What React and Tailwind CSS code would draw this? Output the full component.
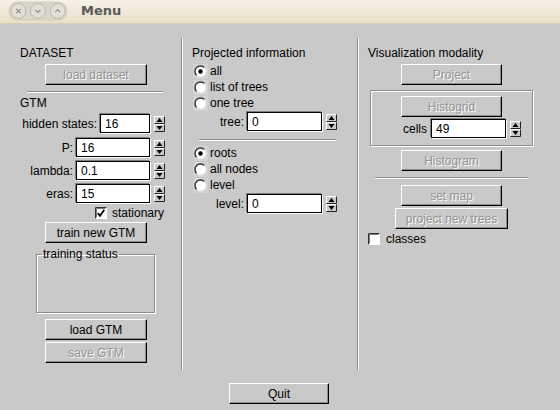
import React from 'react'

function Btn({ children, disabled, className = '' }) {
  return (
    <div
      className={`flex h-[21px] items-center justify-center border border-t-white border-l-white border-r-black border-b-black shadow-[inset_-1px_-1px_0_#8c8c8c] leading-none ${
        disabled ? 'text-[#939393] [text-shadow:1px_1px_0_#fff]' : 'text-black'
      } ${className}`}
    >
      {children}
    </div>
  )
}

function Entry({ value, className = '' }) {
  return (
    <div
      className={`flex h-[19px] items-center border border-black bg-white pl-[4px] leading-none shadow-[1px_1px_0_#fff,-1px_-1px_0_#7c7c7c] ${className}`}
    >
      {value}
    </div>
  )
}

function Spin({ className = '' }) {
  return (
    <svg width="11" height="16" viewBox="0 0 11 16" className={className}>
      <rect x="0" y="0" width="11" height="16" fill="#c9c9c9" />
      <path d="M0.5 7.5V0.5H10.5" stroke="#fff" fill="none" />
      <path d="M0.5 7.5H10.5V0.5" stroke="#222" fill="none" />
      <path d="M0.5 15.5V8.5H10.5" stroke="#fff" fill="none" />
      <path d="M0.5 15.5H10.5V8.5" stroke="#222" fill="none" />
      <polygon points="5.5,2 2.5,6 8.5,6" fill="#000" />
      <polygon points="2.5,10 8.5,10 5.5,14" fill="#000" />
    </svg>
  )
}

function Sep({ className = '' }) {
  return <div className={`h-[2px] border-t border-b border-t-[#8c8c8c] border-b-white ${className}`} />
}

function Radio({ checked, children, className = '' }) {
  return (
    <div className={`flex h-[16px] items-center ${className}`}>
      <svg width="15" height="15" viewBox="0 0 15 15">
        <rect width="15" height="15" fill="#d2d2d2" />
        <circle cx="7.5" cy="7.5" r="5.5" fill="#fff" />
        <path d="M3.6 11.4A5.5 5.5 0 0 1 11.4 3.6" stroke="#333" strokeWidth="1.4" fill="none" />
        <path d="M11.4 3.6A5.5 5.5 0 0 1 3.6 11.4" stroke="#e8e8e8" strokeWidth="1" fill="none" />
        {checked && <circle cx="7.5" cy="7.5" r="2.2" fill="#000" />}
      </svg>
      <span className="ml-[2px] leading-none">{children}</span>
    </div>
  )
}

function Check({ checked }) {
  return (
    <svg width="12" height="12" viewBox="0 0 12 12">
      <rect x="0" y="0" width="12" height="12" fill="#fff" />
      <path d="M0.5 11.5V0.5H11.5" stroke="#333" fill="none" />
      <path d="M1.5 10.5V1.5H10.5" stroke="#777" fill="none" />
      {checked && <path d="M2.8 6.2L5 8.8L9.3 2.8" stroke="#000" strokeWidth="1.8" fill="none" />}
    </svg>
  )
}

function SpinRow({ label, value, entryW, className = '' }) {
  return (
    <div className={`flex items-center justify-end ${className}`}>
      <span className="leading-none">{label}</span>
      <Entry value={value} className={`ml-[3px] ${entryW}`} />
      <Spin className="ml-[4px]" />
    </div>
  )
}

function TitleBar() {
  return (
    <div className="flex h-[24px] items-start border-b border-b-[#d8cfb8] bg-gradient-to-b from-[#f6f2e8] to-[#e9e0c8]">
      <svg width="60" height="20" viewBox="0 0 60 20" className="ml-[8px] mt-[1px]">
        <rect x="1" y="1" width="58" height="18" rx="9" fill="#dcd7cb" stroke="#d2cbba" />
        {[10.5, 30, 49.7].map((cx) => (
          <circle key={cx} cx={cx} cy="10" r="7.5" fill="#e2dfd9" stroke="#bcb7ad" />
        ))}
        <path d="M8.3 7.8L12.7 12.2M12.7 7.8L8.3 12.2" stroke="#8e8a83" strokeWidth="1.2" />
        <path d="M27.5 8.8L30 11.3L32.5 8.8" stroke="#8e8a83" strokeWidth="1.2" fill="none" />
        <path d="M47.2 11.2L49.7 8.7L52.2 11.2" stroke="#8e8a83" strokeWidth="1.2" fill="none" />
      </svg>
      <span className="ml-[13px] mt-[3px] font-['DejaVu_Sans',sans-serif] text-[13px] font-bold leading-[16px] text-[#5a5a5a]">
        Menu
      </span>
    </div>
  )
}

export default function App() {
  return (
    <div className="h-[410px] w-[560px] overflow-hidden bg-[#c9c9c9] font-['Liberation_Sans',Arial,sans-serif] text-[12px] text-black">
      <TitleBar />
      <div className="mt-[14px] flex h-[332px]">
        {/* left column */}
        <div className="flex w-[181px] flex-col">
          <div className="ml-[20px] mt-[8px] leading-[14px]">DATASET</div>
          <Btn disabled className="ml-[45px] mt-[4px] w-[102px]">load dataset</Btn>
          <Sep className="ml-[27px] mt-[6px] w-[136px]" />
          <div className="ml-[20px] mt-[3px] leading-[14px]">GTM</div>
          <SpinRow label="hidden states:" value="16" entryW="w-[50px]" className="mt-[4px] w-[165px]" />
          <SpinRow label="P:" value="16" entryW="w-[74px]" className="mt-[5px] w-[165px]" />
          <SpinRow label="lambda:" value="0.1" entryW="w-[74px]" className="mt-[4px] w-[165px]" />
          <SpinRow label="eras:" value="15" entryW="w-[74px]" className="mt-[4px] w-[165px]" />
          <div className="ml-[95px] mt-[4px] flex h-[12px] items-center">
            <Check checked />
            <span className="ml-[5px] leading-none">stationary</span>
          </div>
          <Btn className="ml-[45px] mt-[3px] w-[102px]">train new GTM</Btn>
          <fieldset className="ml-[36px] mt-[4px] h-[66px] w-[119px] border border-[#8c8c8c] shadow-[inset_1px_1px_0_#fff,1px_1px_0_#fff]">
            <legend className="ml-[5px] px-px leading-[14px]">training status</legend>
          </fieldset>
          <Btn className="ml-[45px] mt-[6px] w-[102px]">load GTM</Btn>
          <Btn disabled className="ml-[45px] mt-[2px] w-[102px]">save GTM</Btn>
        </div>

        <div className="w-[2px] border-l border-r border-l-[#8c8c8c] border-r-white" />

        {/* middle column */}
        <div className="flex w-[174px] flex-col">
          <div className="ml-[9px] mt-[8px] leading-[14px]">Projected information</div>
          <Radio checked className="ml-[10px] mt-[3px]">all</Radio>
          <Radio className="ml-[10px]">list of trees</Radio>
          <Radio className="ml-[10px]">one tree</Radio>
          <SpinRow label="tree:" value="0" entryW="w-[75px]" className="mt-[1px] w-[154px]" />
          <Sep className="ml-[16px] mt-[8px] w-[137px]" />
          <Radio checked className="ml-[10px] mt-[4px]">roots</Radio>
          <Radio className="ml-[10px]">all nodes</Radio>
          <Radio className="ml-[10px]">level</Radio>
          <SpinRow label="level:" value="0" entryW="w-[75px]" className="mt-[1px] w-[154px]" />
        </div>

        <div className="w-[2px] border-l border-r border-l-[#8c8c8c] border-r-white" />

        {/* right column */}
        <div className="flex flex-1 flex-col">
          <div className="ml-[9px] mt-[8px] leading-[14px]">Visualization modality</div>
          <Btn disabled className="ml-[42px] mt-[4px] w-[101px]">Project</Btn>
          <div className="ml-[11px] mt-[5px] flex h-[56px] w-[163px] flex-col border border-[#8c8c8c] shadow-[inset_1px_1px_0_#fff,1px_1px_0_#fff]">
            <Btn disabled className="ml-[30px] mt-[5px] w-[101px]">Histogrid</Btn>
            <div className="ml-[32px] mt-[2px] flex items-center">
              <span className="leading-none">cells</span>
              <Entry value="49" className="ml-[4px] w-[75px]" />
              <Spin className="ml-[4px]" />
            </div>
          </div>
          <Btn disabled className="ml-[42px] mt-[4px] w-[101px]">Histogram</Btn>
          <Sep className="ml-[16px] mt-[6px] w-[153px]" />
          <Btn disabled className="ml-[42px] mt-[6px] w-[101px]">set map</Btn>
          <Btn disabled className="ml-[36px] mt-[2px] w-[113px]">project new trees</Btn>
          <div className="ml-[9px] mt-[3px] flex h-[13px] items-center">
            <Check />
            <span className="ml-[6px] leading-none">classes</span>
          </div>
        </div>
      </div>

      <div className="mt-[13px] flex">
        <Btn className="ml-[229px] w-[100px]">Quit</Btn>
      </div>
    </div>
  )
}
